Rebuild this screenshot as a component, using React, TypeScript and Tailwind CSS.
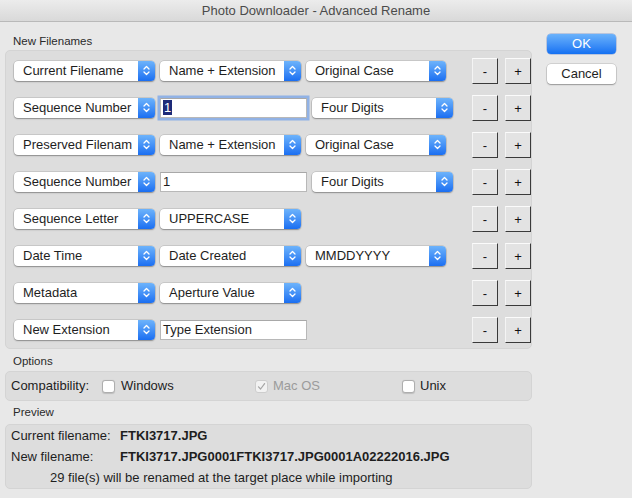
import React from 'react';

type Row =
  | { kind: 'p3'; a: string; b: string; c: string }
  | { kind: 'tf'; a: string; b: string; c: string; focus?: boolean }
  | { kind: 'p2'; a: string; b: string }
  | { kind: 't1'; a: string; b: string };

const rows: Row[] = [
  { kind: 'p3', a: 'Current Filename', b: 'Name + Extension', c: 'Original Case' },
  { kind: 'tf', a: 'Sequence Number', b: '1', c: 'Four Digits', focus: true },
  { kind: 'p3', a: 'Preserved Filenam', b: 'Name + Extension', c: 'Original Case' },
  { kind: 'tf', a: 'Sequence Number', b: '1', c: 'Four Digits' },
  { kind: 'p2', a: 'Sequence Letter', b: 'UPPERCASE' },
  { kind: 'p3', a: 'Date Time', b: 'Date Created', c: 'MMDDYYYY' },
  { kind: 'p2', a: 'Metadata', b: 'Aperture Value' },
  { kind: 't1', a: 'New Extension', b: 'Type Extension' },
];

function Stepper() {
  return (
    <div className="w-[17px] h-full rounded-r-[4px] bg-linear-to-b from-[#6db3fb] to-[#1a6ef1] flex items-center justify-center">
      <svg width="9" height="13" viewBox="0 0 9 13" fill="none">
        <path d="M2 5 L4.5 2.5 L7 5" stroke="white" strokeWidth="1.3" strokeLinecap="round" strokeLinejoin="round" />
        <path d="M2 8 L4.5 10.5 L7 8" stroke="white" strokeWidth="1.3" strokeLinecap="round" strokeLinejoin="round" />
      </svg>
    </div>
  );
}

function Popup({ label, width, className = '' }: { label: string; width: string; className?: string }) {
  return (
    <div
      className={`${width} ${className} h-[20px] flex rounded-[4px] bg-white shadow-[0_0_0_0.5px_rgba(0,0,0,0.18),0_1px_1.5px_rgba(0,0,0,0.3)]`}
    >
      <div className="flex-1 overflow-hidden whitespace-nowrap pl-[9px] text-[13px] leading-[20px] text-[#1e1e1e]">
        {label}
      </div>
      <Stepper />
    </div>
  );
}

function TextField({ value, focus }: { value: string; focus?: boolean }) {
  return (
    <div
      className={`w-[147px] h-[20px] ml-[5px] bg-white border border-[#b8b8b8] border-t-[#a8a8a8] flex items-center pl-[2px] text-[13px] text-[#1e1e1e] ${
        focus ? 'shadow-[0_0_0_2.5px_rgba(95,150,235,0.6)] border-[#8fb4ea]' : ''
      }`}
    >
      {focus ? <span className="bg-[#1d2a78] text-white leading-[15px] px-px">{value}</span> : value}
    </div>
  );
}

function BevelButton({ sign }: { sign: string }) {
  return (
    <div className="w-[26px] h-[26px] bg-[#e3e3e3] border border-t-[#fbfbfb] border-l-[#f4f4f4] border-r-[#3a3a3a] border-b-[#3a3a3a] flex items-center justify-center text-[13px] text-[#111] pt-[2px]">
      {sign}
    </div>
  );
}

function Checkbox({ checked, disabled }: { checked?: boolean; disabled?: boolean }) {
  return (
    <div
      className={`w-[13px] h-[13px] rounded-[3px] border flex items-center justify-center ${
        disabled
          ? 'bg-[#f2f2f2] border-[#cdcdcd]'
          : 'bg-white border-[#aeaeae] shadow-[0_0.5px_1px_rgba(0,0,0,0.15)]'
      }`}
    >
      {checked && (
        <svg width="9" height="9" viewBox="0 0 9 9" fill="none">
          <path d="M1.5 4.8 L3.6 7 L7.6 1.6" stroke="#a5a5a5" strokeWidth="1.2" strokeLinecap="round" strokeLinejoin="round" />
        </svg>
      )}
    </div>
  );
}

function SectionLabel({ text }: { text: string }) {
  return <div className="h-[14px] leading-[14px] pl-[8px] text-[11.5px] text-[#2a2a2a]">{text}</div>;
}

export default function App() {
  return (
    <div className="w-[632px] h-[498px] overflow-hidden bg-[#e8e8e8] font-['Liberation_Sans',Arial,sans-serif] text-[#1e1e1e]">
      <div className="h-[22px] bg-linear-to-b from-[#ececec] to-[#d9d9d9] border-b border-[#b9b9b9] flex items-center justify-center text-[13px] text-[#4b4b4b]">
        Photo Downloader - Advanced Rename
      </div>

      <div className="flex pl-[5px]">
        <div className="w-[527px] flex flex-col">
          <div className="mt-[12px]">
            <SectionLabel text="New Filenames" />
          </div>
          <div className="mt-[2px] rounded-[5px] bg-[#dddddd] border border-[#d4d4d4] pt-[1px]">
            {rows.map((r, i) => (
              <div key={i} className="h-[37px] flex items-center pl-[8px]">
                <div className="w-[458px] flex items-center">
                  <Popup label={r.a} width="w-[141px]" />
                  {r.kind === 'p3' && (
                    <>
                      <Popup label={r.b} width="w-[141px]" className="ml-[5px]" />
                      <Popup label={r.c} width="w-[140px]" className="ml-[5px]" />
                    </>
                  )}
                  {r.kind === 'tf' && (
                    <>
                      <TextField value={r.b} focus={r.focus} />
                      <Popup label={r.c} width="w-[141px]" className="ml-[5px]" />
                    </>
                  )}
                  {r.kind === 'p2' && <Popup label={r.b} width="w-[141px]" className="ml-[5px]" />}
                  {r.kind === 't1' && <TextField value={r.b} />}
                </div>
                <div className="flex gap-[7px]">
                  <BevelButton sign="-" />
                  <BevelButton sign="+" />
                </div>
              </div>
            ))}
          </div>

          <div className="mt-[5px]">
            <SectionLabel text="Options" />
          </div>
          <div className="mt-[3px] h-[30px] rounded-[5px] bg-[#dddddd] border border-[#d4d4d4] flex items-center pl-[5px] text-[13px]">
            <div className="w-[91px]">Compatibility:</div>
            <div className="w-[153px] flex items-center gap-[6px]">
              <Checkbox />
              <span>Windows</span>
            </div>
            <div className="w-[147px] flex items-center gap-[5px]">
              <Checkbox checked disabled />
              <span className="text-[#9b9b9b]">Mac OS</span>
            </div>
            <div className="flex items-center gap-[5px]">
              <Checkbox />
              <span>Unix</span>
            </div>
          </div>

          <div className="mt-[4px]">
            <SectionLabel text="Preview" />
          </div>
          <div className="mt-[5px] rounded-[5px] bg-[#dddddd] border border-[#d4d4d4] pl-[5px] text-[13px] leading-[21px]">
            <div className="flex">
              <div className="w-[109px]">Current filename:</div>
              <div className="font-bold">FTKI3717.JPG</div>
            </div>
            <div className="flex">
              <div className="w-[109px]">New filename:</div>
              <div className="font-bold">FTKI3717.JPG0001FTKI3717.JPG0001A02222016.JPG</div>
            </div>
            <div className="pl-[39px]">29 file(s) will be renamed at the target place while importing</div>
          </div>
        </div>

        <div className="ml-[15px] pt-[12px] flex flex-col">
          <div className="w-[69px] h-[20px] rounded-[4px] bg-linear-to-b from-[#6ab2fb] to-[#1270f2] shadow-[0_0_0_0.5px_rgba(0,60,180,0.4)] flex items-center justify-center text-[13px] text-white">
            OK
          </div>
          <div className="mt-[10px] w-[69px] h-[20px] rounded-[4px] bg-white shadow-[0_0_0_0.5px_rgba(0,0,0,0.2),0_1px_1.5px_rgba(0,0,0,0.28)] flex items-center justify-center text-[13px]">
            Cancel
          </div>
        </div>
      </div>
    </div>
  );
}
